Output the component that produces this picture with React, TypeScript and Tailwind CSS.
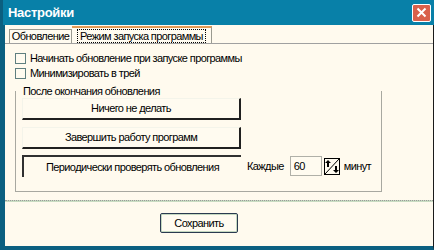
import React from 'react';

const font = { fontFamily: '"Liberation Sans", Arial, sans-serif' };

function XpButton({ label, className }: { label: string; className?: string }) {
  return (
    <div
      className={`flex h-[22px] items-center justify-center border-t border-l border-t-[#f4f4ea] border-l-[#f4f4ea] border-r-2 border-b-2 border-r-[#202020] border-b-[#202020] bg-[#fffbf0] text-[11px] text-black ${className ?? ''}`}
    >
      {label}
    </div>
  );
}

function Checkbox({ label }: { label: string }) {
  return (
    <div className="flex h-[15px] items-center gap-[4px]">
      <span className="h-[11px] w-[11px] border border-[#5f7f80] bg-[#fffbf0]" />
      <span className="whitespace-nowrap text-[11px] leading-none text-black">{label}</span>
    </div>
  );
}

function SpinIcon() {
  return (
    <svg width="16" height="17" viewBox="0 0 16 17" className="block">
      <rect x="0.5" y="0.5" width="15" height="16" fill="#fffbf0" stroke="#000" />
      <line x1="1" y1="16" x2="15" y2="1" stroke="#000" strokeWidth="1" />
      <path d="M4 2 L7 5 L5 5 L5 9 L3 9 L3 5 L1 5 Z" fill="#000" />
      <path d="M12 15 L15 12 L13 12 L13 8 L11 8 L11 12 L9 12 Z" fill="#000" />
    </svg>
  );
}

export default function App() {
  return (
    <div className="flex h-[250px] w-[434px] flex-col overflow-hidden bg-[#fffaee] tracking-[-0.6px]" style={font}>
      <div className="flex h-[25px] items-center justify-between border-l-[3px] border-[#0b5f80] bg-[#0880a8] pl-[5px] pr-[3px]">
        <span className="text-[13px] font-bold tracking-[-0.3px] text-white">Настройки</span>
        <div className="flex h-[18px] w-[19px] items-center justify-center rounded-[2px] border border-white bg-[#d9604b]">
          <svg width="11" height="11" viewBox="0 0 11 11">
            <path d="M1.5 1.5 L9.5 9.5 M9.5 1.5 L1.5 9.5" stroke="#fff" strokeWidth="2" />
          </svg>
        </div>
      </div>

      <div className="flex flex-1 flex-col border-b-[4px] border-l-[5px] border-r border-[#0b5f80] border-r-[#1a1a1a]">
        <div className="mt-[1px] flex h-[17px] items-end pl-[4px]">
          <div className="flex h-[14px] w-[63px] items-center justify-center whitespace-nowrap border border-b-0 border-[#9a9a90] bg-[#fffbf0] text-[11px] text-black">
            Обновление
          </div>
          <div className="flex h-[17px] w-[140px] items-center justify-center whitespace-nowrap border-t-2 border-r border-t-[#e39a55] border-r-[#9a9a90] bg-[#fffbf0]">
            <span className="border border-dotted border-black px-[2px] text-[11px] leading-[12px] text-black">
              Режим запуска программы
            </span>
          </div>
        </div>

        <div className="flex flex-1 flex-col border-t border-[#a0a0a0] pl-[10px] pt-[7px]">
          <Checkbox label="Начинать обновление при запуске программы" />
          <Checkbox label="Минимизировать в трей" />

          <fieldset className="mt-[4px] w-[367px] border border-t-0 border-[#a8a8a0] pl-[6px] pb-[14px]">
            <legend className="px-[1px] text-[11px] leading-[12px] text-black">После окончания обновления</legend>
            <XpButton label="Ничего не делать" className="mt-[1px] w-[219px]" />
            <XpButton label="Завершить работу программ" className="mt-[7px] w-[219px]" />
            <div className="mt-[6px] flex items-center whitespace-nowrap">
              <div className="flex h-[22px] w-[219px] items-center justify-center border-t-2 border-l-2 border-[#303030] text-[11px] text-black">
                Периодически проверять обновления
              </div>
              <span className="ml-[6px] text-[11px] text-black">Каждые</span>
              <div className="ml-[6px] flex h-[20px] w-[32px] items-center border border-[#b0b0a8] bg-[#fffbf0] pl-[3px] text-[11px] text-black">
                60
              </div>
              <div className="ml-[2px]">
                <SpinIcon />
              </div>
              <span className="ml-[4px] text-[11px] text-black">минут</span>
            </div>
          </fieldset>

          <div className="mt-[8px] -ml-[10px] h-[2px] border-t border-dotted border-t-[#9a9a9a] bg-[#c9dcc2]" />

          <div className="mt-[11px] pl-[145px]">
            <div className="flex h-[20px] w-[78px] items-center justify-center rounded-[2px] border border-[#2a3a50] bg-[#fffbf0] text-[11px] text-black shadow-[inset_0_0_0_1px_#c4d8c0]">
              Сохранить
            </div>
          </div>
        </div>
      </div>
    </div>
  );
}
